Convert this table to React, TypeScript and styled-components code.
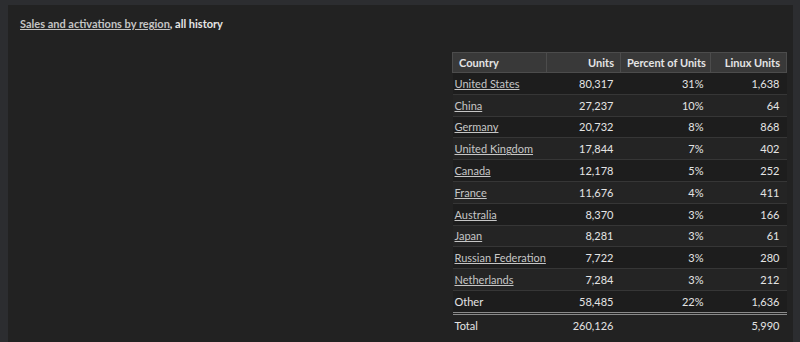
import * as React from "react";
import styled, { createGlobalStyle } from "styled-components";

const GlobalStyle = createGlobalStyle`
  html, body {
    margin: 0;
    padding: 0;
    background: #2c2d30;
    font-family: Lato, "Open Sans", sans-serif;
  }
`;

const Page = styled.div`
  height: 342px;
  overflow: hidden;
  padding: 5px 7px 0 8px;
`;

const Panel = styled.div`
  background: #222222;
  height: 400px;
  padding: 12px 6px 0 12px;
  display: flex;
  flex-direction: column;
`;

const Title = styled.div`
  font-size: 11px;
  font-weight: bold;
  color: #e6e6e6;
  line-height: 14px;
  a {
    color: #c4c4c4;
    text-decoration: underline;
  }
`;

const TableWrap = styled.div`
  display: flex;
  justify-content: flex-end;
  margin-top: 21px;
`;

const Table = styled.table`
  width: 334px;
  table-layout: fixed;
  border-collapse: collapse;
  font-size: 11px;
  color: #e4e4e4;
  white-space: nowrap;
`;

const Col = styled.col<{ $w: number }>`
  width: ${(p) => p.$w}px;
`;

const HeadCell = styled.th<{ $align?: string }>`
  text-align: ${(p) => p.$align || "right"};
  background: #393939;
  border: 1px solid #4c4c4c;
  font-weight: bold;
  padding: 0 6px;
  height: 19px;
  overflow: hidden;
`;

const Row = styled.tr<{ $alt?: boolean }>`
  background: ${(p) => (p.$alt ? "#242424" : "#1d1d1d")};
  border-bottom: 1px solid #363636;
`;

const Cell = styled.td<{ $align?: string }>`
  text-align: ${(p) => p.$align || "right"};
  padding: 0 7px 0 2px;
  height: 20.8px;
  overflow: hidden;
  a {
    color: #c6c6c6;
    text-decoration: underline;
  }
`;

const OtherRow = styled.tr`
  background: #1d1d1d;
  border-bottom: 3px double #8a8a8a;
`;

const TotalRow = styled.tr`
  background: #222222;
`;

const rows = [
  ["United States", "80,317", "31%", "1,638"],
  ["China", "27,237", "10%", "64"],
  ["Germany", "20,732", "8%", "868"],
  ["United Kingdom", "17,844", "7%", "402"],
  ["Canada", "12,178", "5%", "252"],
  ["France", "11,676", "4%", "411"],
  ["Australia", "8,370", "3%", "166"],
  ["Japan", "8,281", "3%", "61"],
  ["Russian Federation", "7,722", "3%", "280"],
  ["Netherlands", "7,284", "3%", "212"],
];

const App = (): JSX.Element => {
  return (
    <>
      <GlobalStyle />
      <Page>
        <Panel>
          <Title>
            <a href="#">Sales and activations by region</a>, all history
          </Title>
          <TableWrap>
            <Table>
              <colgroup>
                <Col $w={94} />
                <Col $w={74} />
                <Col $w={90} />
                <Col $w={76} />
              </colgroup>
              <thead>
                <tr>
                  <HeadCell $align="left">Country</HeadCell>
                  <HeadCell>Units</HeadCell>
                  <HeadCell>Percent of Units</HeadCell>
                  <HeadCell>Linux Units</HeadCell>
                </tr>
              </thead>
              <tbody>
                {rows.map((r, i) => (
                  <Row key={r[0]} $alt={i % 2 === 1}>
                    <Cell $align="left">
                      <a href="#">{r[0]}</a>
                    </Cell>
                    <Cell>{r[1]}</Cell>
                    <Cell>{r[2]}</Cell>
                    <Cell>{r[3]}</Cell>
                  </Row>
                ))}
                <OtherRow>
                  <Cell $align="left">Other</Cell>
                  <Cell>58,485</Cell>
                  <Cell>22%</Cell>
                  <Cell>1,636</Cell>
                </OtherRow>
                <TotalRow>
                  <Cell $align="left">Total</Cell>
                  <Cell>260,126</Cell>
                  <Cell></Cell>
                  <Cell>5,990</Cell>
                </TotalRow>
              </tbody>
            </Table>
          </TableWrap>
        </Panel>
      </Page>
    </>
  );
};

export default App;
